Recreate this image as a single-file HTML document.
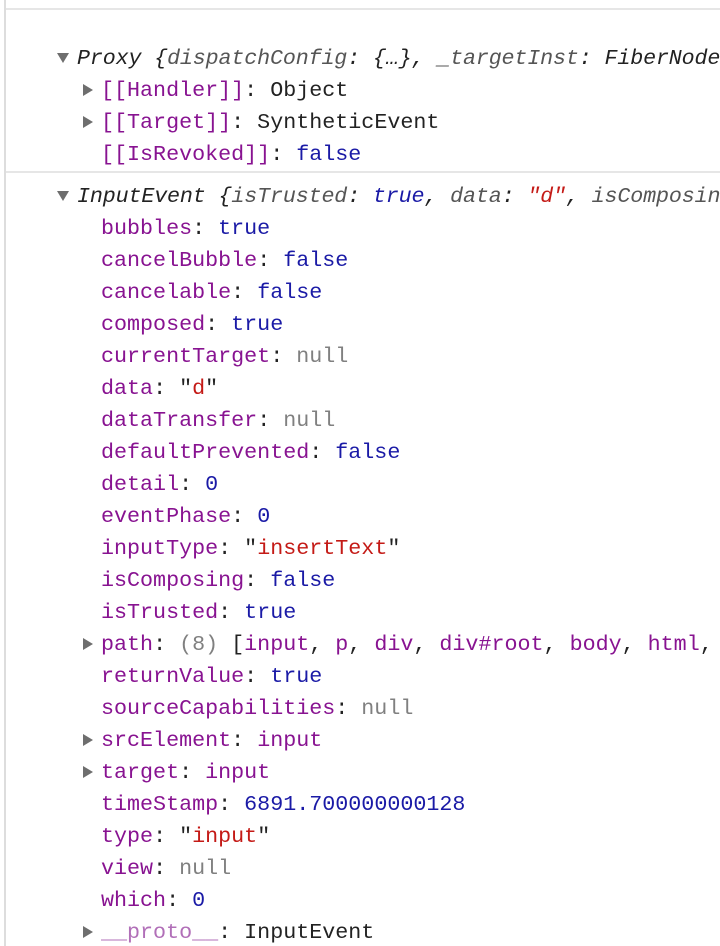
<!DOCTYPE html>
<html><head><style>
html,body{margin:0;width:720px;height:946px;overflow:hidden}
body{background:#fff;position:relative;font-family:"Liberation Mono",monospace;font-size:21.7px;color:#222}
.vl{position:absolute;left:4px;top:0;width:2px;height:946px;background:#ddd}
.hl{position:absolute;left:6px;right:0;height:2px;background:#e6e6e6}
.r{position:absolute;white-space:pre;line-height:32px;height:32px;overflow:hidden;right:0;margin-top:1px}
.k{color:#881391}.b{color:#1a1aa6}.s{color:#c41a16}.n{color:#808080}.i{font-style:italic}
.t{position:absolute;width:0;height:0;border-left:10px solid #6e6e6e;border-top:6px solid transparent;border-bottom:6px solid transparent}
.d{position:absolute;width:0;height:0;border-top:10px solid #6e6e6e;border-left:6px solid transparent;border-right:6px solid transparent}
.p{color:#b16fb8}
</style></head><body>
<div class="vl"></div>
<div class="hl" style="top:8px"></div>
<div class="hl" style="top:171px"></div>
<div class="d" style="left:57px;top:53px"></div>
<div class="r i" style="left:77px;top:42px;letter-spacing:-0.15px">Proxy {<span style="color:#555">dispatchConfig</span>: {…}, <span style="color:#555">_targetInst</span>: FiberNode</div>
<div class="t" style="left:83px;top:84px"></div>
<div class="r" style="left:101px;top:74px"><span class="k">[[Handler]]</span>: Object</div>
<div class="t" style="left:83px;top:116px"></div>
<div class="r" style="left:101px;top:106px"><span class="k">[[Target]]</span>: SyntheticEvent</div>
<div class="r" style="left:101px;top:138px"><span class="k">[[IsRevoked]]</span>: <span class="b">false</span></div>
<div class="d" style="left:57px;top:191px"></div>
<div class="r i" style="left:77px;top:180px;letter-spacing:-0.15px">InputEvent {<span style="color:#555">isTrusted</span>: <span class="b">true</span>, <span style="color:#555">data</span>: <span class="s">"d"</span>, <span style="color:#555">isComposing</span></div>
<div class="r" style="left:101px;top:212px"><span class="k">bubbles</span>: <span class="b">true</span></div>
<div class="r" style="left:101px;top:244px"><span class="k">cancelBubble</span>: <span class="b">false</span></div>
<div class="r" style="left:101px;top:276px"><span class="k">cancelable</span>: <span class="b">false</span></div>
<div class="r" style="left:101px;top:308px"><span class="k">composed</span>: <span class="b">true</span></div>
<div class="r" style="left:101px;top:340px"><span class="k">currentTarget</span>: <span class="n">null</span></div>
<div class="r" style="left:101px;top:372px"><span class="k">data</span>: "<span class="s">d</span>"</div>
<div class="r" style="left:101px;top:404px"><span class="k">dataTransfer</span>: <span class="n">null</span></div>
<div class="r" style="left:101px;top:436px"><span class="k">defaultPrevented</span>: <span class="b">false</span></div>
<div class="r" style="left:101px;top:468px"><span class="k">detail</span>: <span class="b">0</span></div>
<div class="r" style="left:101px;top:500px"><span class="k">eventPhase</span>: <span class="b">0</span></div>
<div class="r" style="left:101px;top:532px"><span class="k">inputType</span>: "<span class="s">insertText</span>"</div>
<div class="r" style="left:101px;top:564px"><span class="k">isComposing</span>: <span class="b">false</span></div>
<div class="r" style="left:101px;top:596px"><span class="k">isTrusted</span>: <span class="b">true</span></div>
<div class="t" style="left:83px;top:638px"></div>
<div class="r" style="left:101px;top:628px"><span class="k">path</span>: <span class="n">(8)</span> [<span class="k">input</span>, <span class="k">p</span>, <span class="k">div</span>, <span class="k">div#root</span>, <span class="k">body</span>, <span class="k">html</span>,</div>
<div class="r" style="left:101px;top:660px"><span class="k">returnValue</span>: <span class="b">true</span></div>
<div class="r" style="left:101px;top:692px"><span class="k">sourceCapabilities</span>: <span class="n">null</span></div>
<div class="t" style="left:83px;top:734px"></div>
<div class="r" style="left:101px;top:724px"><span class="k">srcElement</span>: <span class="k">input</span></div>
<div class="t" style="left:83px;top:766px"></div>
<div class="r" style="left:101px;top:756px"><span class="k">target</span>: <span class="k">input</span></div>
<div class="r" style="left:101px;top:788px"><span class="k">timeStamp</span>: <span class="b">6891.700000000128</span></div>
<div class="r" style="left:101px;top:820px"><span class="k">type</span>: "<span class="s">input</span>"</div>
<div class="r" style="left:101px;top:852px"><span class="k">view</span>: <span class="n">null</span></div>
<div class="r" style="left:101px;top:884px"><span class="k">which</span>: <span class="b">0</span></div>
<div class="t" style="left:83px;top:926px"></div>
<div class="r" style="left:101px;top:916px"><span class="p">__proto__</span>: InputEvent</div>
</body></html>
